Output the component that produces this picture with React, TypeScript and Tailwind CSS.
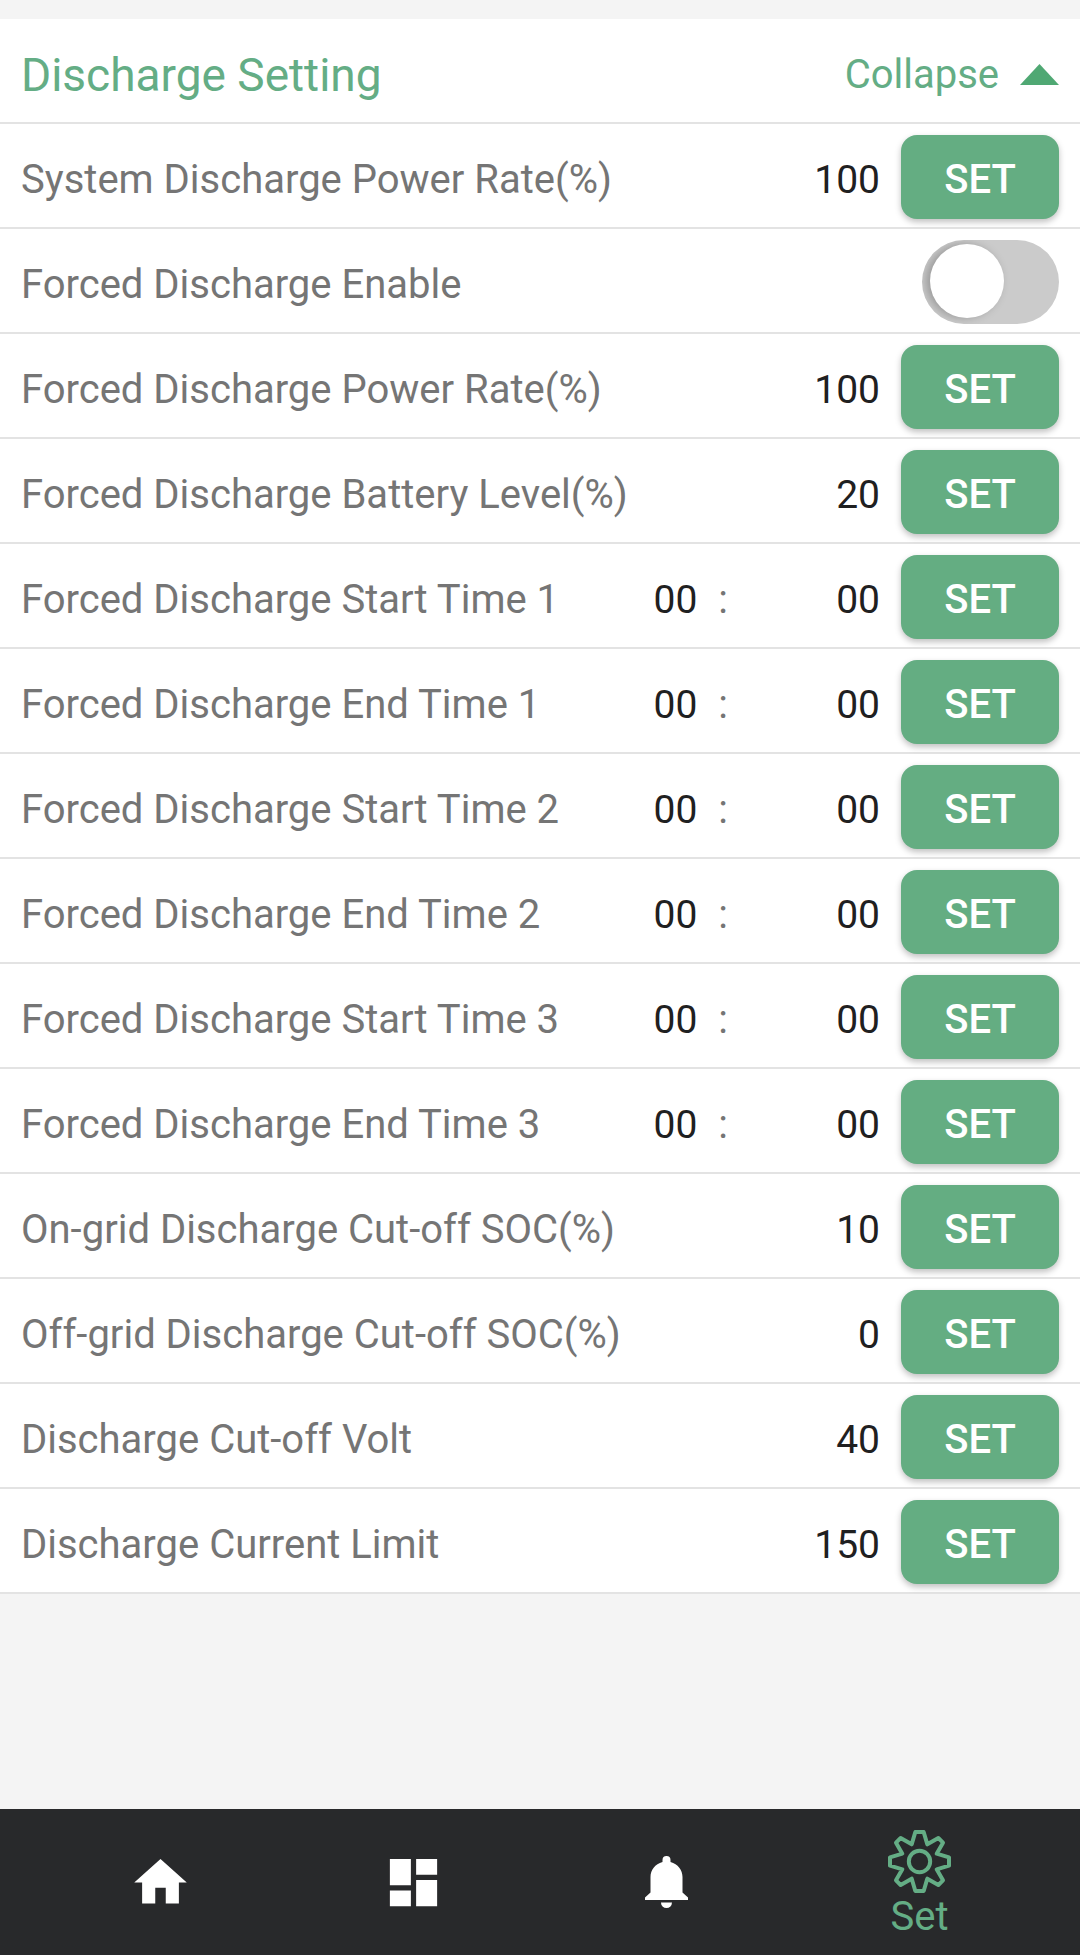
import React, { useState } from 'react';
import { MdDashboard, MdHome } from 'react-icons/md';

interface Setting {
  id: string;
  label: string;
  kind: 'value' | 'time' | 'switch';
  value?: string;
}

const SETTINGS: Setting[] = [
  { id: 'system-power-rate', label: 'System Discharge Power Rate(%)', kind: 'value', value: '100' },
  { id: 'forced-enable', label: 'Forced Discharge Enable', kind: 'switch' },
  { id: 'forced-power-rate', label: 'Forced Discharge Power Rate(%)', kind: 'value', value: '100' },
  { id: 'forced-battery-level', label: 'Forced Discharge Battery Level(%)', kind: 'value', value: '20' },
  { id: 'start-1', label: 'Forced Discharge Start Time 1', kind: 'time' },
  { id: 'end-1', label: 'Forced Discharge End Time 1', kind: 'time' },
  { id: 'start-2', label: 'Forced Discharge Start Time 2', kind: 'time' },
  { id: 'end-2', label: 'Forced Discharge End Time 2', kind: 'time' },
  { id: 'start-3', label: 'Forced Discharge Start Time 3', kind: 'time' },
  { id: 'end-3', label: 'Forced Discharge End Time 3', kind: 'time' },
  { id: 'on-grid-soc', label: 'On-grid Discharge Cut-off SOC(%)', kind: 'value', value: '10' },
  { id: 'off-grid-soc', label: 'Off-grid Discharge Cut-off SOC(%)', kind: 'value', value: '0' },
  { id: 'cut-off-volt', label: 'Discharge Cut-off Volt', kind: 'value', value: '40' },
  { id: 'current-limit', label: 'Discharge Current Limit', kind: 'value', value: '150' },
];

const inputClass =
  'shrink-0 bg-transparent pt-1.5 text-right text-[39px] leading-[48px] text-[#1f2021] outline-none';

function BellIcon() {
  return (
    <svg width="43" height="52" viewBox="0 0 43 52" fill="#fff" aria-hidden="true">
      <path d="M17.500 6V4a4 4 0 0 1 8 0v2C33 8 37.500 14 37.500 21v15.500l5.500 5V44H0v-2.500l5.500-5V21C5.500 14 10 8 17.500 6z" />
      <path d="M16 46.500h11a5.500 5.500 0 0 1-11 0z" />
    </svg>
  );
}

function GearIcon() {
  return (
    <svg
      width="63"
      height="63"
      viewBox="0 0 189 189"
      fill="none"
      stroke="#64ad85"
      strokeWidth="12"
      strokeLinejoin="round"
      aria-hidden="true"
    >
      <path d="M82 6h25l11 37 33-19 14 14-19 33 37 11v25l-37 11 19 33-14 14-33-19-11 37H82l-11-37-33 19-14-14 19-33-37-11V82l37-11-19-33 14-14 33 19z" />
      <circle cx="94.500" cy="94.500" r="32" />
    </svg>
  );
}

function SettingRow({ setting }: { setting: Setting }) {
  const { id, label, kind, value } = setting;
  const [enabled, setEnabled] = useState(false);

  return (
    <div className="flex items-center gap-[21px] border-b-2 border-[#e3e3e3] bg-white px-[21px] pt-[11px] pb-2">
      <label
        htmlFor={id}
        className="min-w-0 flex-1 whitespace-nowrap pt-1.5 text-[40px] leading-[48px] text-[#757575]"
      >
        {label}
      </label>

      {kind === 'switch' && (
        <input
          id={id}
          type="checkbox"
          role="switch"
          checked={enabled}
          onChange={(e) => setEnabled(e.target.checked)}
          className="h-[84px] w-[137px] shrink-0 appearance-none overflow-hidden rounded-full bg-[#cbcbcb] pt-1 pl-2 before:block before:size-[74px] before:rounded-full before:bg-white before:shadow-[-4px_0_10px_rgba(0,0,0,0.25)] checked:bg-[#64ad82] checked:pl-[55px]"
        />
      )}

      {kind === 'value' && (
        <input id={id} type="text" inputMode="numeric" defaultValue={value} className={`${inputClass} w-[131px]`} />
      )}

      {kind === 'time' && (
        <>
          <input id={id} type="text" inputMode="numeric" defaultValue="00" className={`${inputClass} w-[80px]`} />
          <span className="pt-1.5 text-[40px] leading-[48px] text-[#757575]">:</span>
          <input
            type="text"
            inputMode="numeric"
            defaultValue="00"
            aria-label={`${label} minutes`}
            className={`${inputClass} w-[131px]`}
          />
        </>
      )}

      {kind !== 'switch' && (
        <button
          type="button"
          className="h-[84px] w-[158px] shrink-0 rounded-[16px] bg-[#64ad82] pt-1.5 text-[40px] leading-[48px] font-medium text-white shadow-[0_3px_6px_rgba(0,0,0,0.25)]"
        >
          SET
        </button>
      )}
    </div>
  );
}

export default function App() {
  const [open, setOpen] = useState(true);

  return (
    <div className="flex min-h-screen flex-col bg-[#f4f4f4] font-['Roboto',sans-serif]">
      <main className="flex-1 pt-[19px]">
        <section>
          <header className="flex h-[105px] items-center justify-between border-b-2 border-[#e3e3e3] bg-white px-[21px] pt-2">
            <h1 className="text-[46px] leading-[54px] text-[#64ad85]">Discharge Setting</h1>
            <button
              type="button"
              aria-expanded={open}
              onClick={() => setOpen(!open)}
              className="flex items-center gap-[21px] text-[40px] leading-[48px] text-[#64ad85]"
            >
              {open ? 'Collapse' : 'Expand'}
              <svg
                width="39"
                height="21"
                viewBox="0 0 39 21"
                className={open ? '' : 'rotate-180'}
                aria-hidden="true"
              >
                <path d="M19.500 0L39 21H0z" fill="#4fa873" />
              </svg>
            </button>
          </header>
          {open && SETTINGS.map((setting) => <SettingRow key={setting.id} setting={setting} />)}
        </section>
      </main>

      <nav className="grid h-[146px] grid-cols-4 bg-[#28292b] px-[34px]">
        <a href="#home" aria-label="Home" className="flex items-center justify-center text-white">
          <MdHome size={63} />
        </a>
        <a href="#dashboard" aria-label="Dashboard" className="flex items-center justify-center text-white">
          <MdDashboard size={63} />
        </a>
        <a href="#alerts" aria-label="Alerts" className="flex items-center justify-center">
          <BellIcon />
        </a>
        <a href="#set" className="flex flex-col items-center justify-center gap-1 pt-0.5 text-[40px] leading-[40px] text-[#64ad85]">
          <GearIcon />
          Set
        </a>
      </nav>
    </div>
  );
}
